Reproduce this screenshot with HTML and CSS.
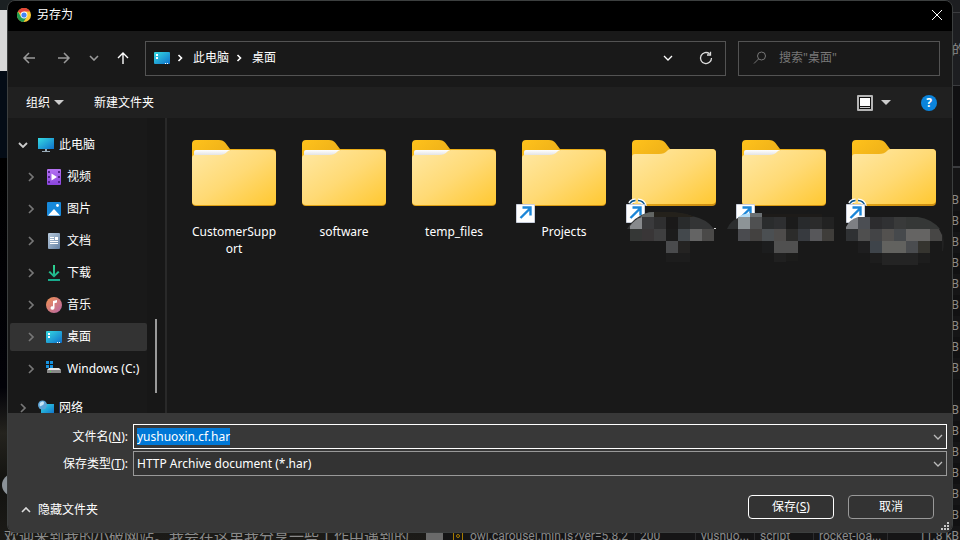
FILE: index.html
```html
<!DOCTYPE html>
<html lang="zh-CN">
<head>
<meta charset="utf-8">
<title>另存为</title>
<link rel="stylesheet" href="styles.css">
</head>
<body>
<svg class="defs" aria-hidden="true">
  <defs>
    <linearGradient id="gFront" x1="0" y1="0" x2="1" y2="1">
      <stop offset="0" stop-color="#ffe8a4"/><stop offset=".5" stop-color="#ffda75"/><stop offset="1" stop-color="#ffc831"/>
    </linearGradient>
    <linearGradient id="gBack" x1="0" y1="0" x2="1" y2="1">
      <stop offset="0" stop-color="#ffc21c"/><stop offset="1" stop-color="#c98a10"/>
    </linearGradient>
    <linearGradient id="gPaper" x1="0" y1="0" x2="0" y2="1">
      <stop offset="0" stop-color="#fff"/><stop offset="1" stop-color="#d3d3d3"/>
    </linearGradient>
    <linearGradient id="gBlue" x1="0" y1="0" x2="1" y2="1">
      <stop offset="0" stop-color="#35dbe2"/><stop offset="1" stop-color="#0f70cc"/>
    </linearGradient>
    <linearGradient id="gPurple" x1="0" y1="0" x2="0" y2="1">
      <stop offset="0" stop-color="#b573f2"/><stop offset="1" stop-color="#8a45dd"/>
    </linearGradient>
    <linearGradient id="gDoc" x1="0" y1="0" x2="1" y2="1">
      <stop offset="0" stop-color="#b9cbdd"/><stop offset="1" stop-color="#6481a3"/>
    </linearGradient>
    <linearGradient id="gMusic" x1="0" y1="0" x2="1" y2="1">
      <stop offset="0" stop-color="#f0914f"/><stop offset="1" stop-color="#b766a8"/>
    </linearGradient>
    <linearGradient id="gDown" x1="0" y1="0" x2="0" y2="1">
      <stop offset="0" stop-color="#2fd390"/><stop offset="1" stop-color="#17a98c"/>
    </linearGradient>

    <symbol id="folder" viewBox="0 0 96 96">
      <path d="M6 16a4 4 0 0 1 4-4h23c3 0 5 1 6.500 3l4.500 6h42a4 4 0 0 1 4 4v49a4 4 0 0 1-4 4h-76a4 4 0 0 1-4-4z" fill="url(#gBack)"/>
      <path d="M8 24a2 2 0 0 1 2-2h34v8H8z" fill="url(#gPaper)"/>
      <path d="M6 30c0-2 1-3 3-3h24c4 0 6-1 8-3l1-1c1-.8 2-1 3-1h41a4 4 0 0 1 4 4v47a4 4 0 0 1-4 4h-76a4 4 0 0 1-4-4z" fill="url(#gFront)"/>
    </symbol>
    <symbol id="folder-empty" viewBox="0 0 96 96">
      <path d="M6 16a4 4 0 0 1 4-4h23c3 0 5 1 6.500 3l4.500 6h42a4 4 0 0 1 4 4v49a4 4 0 0 1-4 4h-76a4 4 0 0 1-4-4z" fill="url(#gBack)"/>
      <path d="M6 29c0-2 1-3 3-3h24c4 0 6-1 8-3l1-1c1-.8 2-1 3-1h41a4 4 0 0 1 4 4v47a4 4 0 0 1-4 4h-76a4 4 0 0 1-4-4z" fill="url(#gFront)"/>
    </symbol>
    <symbol id="shortcut" viewBox="0 0 96 96">
      <path d="M.5 76.500h18v18H.5z" fill="#fff" stroke="#c9cfdc"/>
      <path d="M4.500 90 14 80.500M6.500 79.500H14.500V87.500" fill="none" stroke="#1b86d8" stroke-width="2.400"/>
    </symbol>
    <symbol id="sync" viewBox="0 0 96 96">
      <path d="M4 75.500c1-2 3-3 5.500-3M12 72.500c3 0 6 2 7 5.500" fill="none" stroke="#fff" stroke-width="4"/>
      <path d="M4 75.500c1-2 3-3 5.500-3M12 72.500c3 0 6 2 7 5.500" fill="none" stroke="#0d5892" stroke-width="1.500"/>
    </symbol>
    <symbol id="desktop" viewBox="0 0 16 16">
      <rect x="0" y="2" width="16" height="12" rx="1" fill="url(#gBlue)"/>
      <path d="M2 4h2v2H2zM2 7h2v2H2zM11 13h1v1h-1zM13 13h1v1h-1z" fill="#fff"/>
    </symbol>
    <symbol id="right" viewBox="0 0 16 16"><path d="M6 4l4 4-4 4" fill="none" stroke="currentColor" stroke-width="1.700"/></symbol>
    <symbol id="down" viewBox="0 0 16 16"><path d="M4 6l4 4 4-4" fill="none" stroke="currentColor" stroke-width="1.300"/></symbol>
    <symbol id="caret" viewBox="0 0 10 5"><path d="M0 0h10L5 5z" fill="currentColor"/></symbol>
  </defs>
</svg>

<div class="backdrop" aria-hidden="true">
  <div class="site">
    <div class="site-top"></div>
    <div class="site-light"></div>
    <div class="site-navy"></div>
    <div class="site-photo">
      <span class="knob"></span>
      <p class="site-text">欢迎来到我的小破网站。我会在这里我分享一些工作中遇到的</p>
    </div>
  </div>
  <div class="site-scroll"></div>
  <div class="devtools">
    <div class="dev-tabs"></div>
    <div class="dev-note">的</div>
    <div class="dev-chart"></div>
    <div class="dev-head"></div>
    <div class="dev-row">B</div><div class="dev-row">B</div><div class="dev-row">B</div>
    <div class="dev-row">B</div><div class="dev-row">B</div><div class="dev-row">B</div>
    <div class="dev-row">B</div><div class="dev-row">B</div><div class="dev-row">B</div>
    <div class="dev-row"></div><div class="dev-row">B</div><div class="dev-row">B</div>
    <div class="dev-row">B</div><div class="dev-row">B</div><div class="dev-row">B</div>
    <div class="dev-row">B</div>
    <div class="dev-row full">
      <span class="dev-name"><svg width="12" height="14" viewBox="0 0 12 14" fill="none" stroke="#a87c00"><path d="M1.500.5h9v13h-9z"/><circle cx="6" cy="6" r="1.500"/></svg>owl.carousel.min.js?ver=5.8.2</span>
      <span>200</span><span>yushuo...</span><span>script</span><span class="dev-init">rocket-loa...</span><span class="dev-size">11.8 kB</span>
    </div>
  </div>
</div>

<main class="dialog">
  <header class="title">
    <svg width="14" height="14" viewBox="0 0 14 14">
      <circle cx="7" cy="7" r="7" fill="#fbc934"/>
      <path d="M7 7 .9 3.500A7 7 0 0 1 13.100 3.500H7z" fill="#e5453a"/>
      <path d="M.9 3.500A7 7 0 0 0 6.500 14L10 8.800 7 7 4 8.700z" fill="#219a52"/>
      <circle cx="7" cy="7" r="3.400" fill="#fff"/><circle cx="7" cy="7" r="2.600" fill="#4285f4"/>
    </svg>
    <h1>另存为</h1>
    <button class="close" aria-label="关闭"><svg width="10" height="10" viewBox="0 0 10 10" fill="none" stroke="#fff"><path d="M0 0l10 10M10 0L0 10"/></svg></button>
  </header>

  <nav class="navbar">
    <div class="moves">
      <button aria-label="后退"><svg width="14" height="12" viewBox="0 0 14 12" fill="none" stroke="#999" stroke-width="1.500"><path d="M13 6H2M7 1L2 6l5 5"/></svg></button>
      <button aria-label="前进"><svg width="14" height="12" viewBox="0 0 14 12" fill="none" stroke="#999" stroke-width="1.500"><path d="M1 6h11M7 1l5 5-5 5"/></svg></button>
      <button class="recent" aria-label="最近浏览的位置"><svg width="10" height="6" viewBox="0 0 10 6" fill="none" stroke="#999" stroke-width="1.600"><path d="M1 1l4 4 4-4"/></svg></button>
      <button class="up" aria-label="上移"><svg width="12" height="14" viewBox="0 0 12 14" fill="none" stroke="#fff" stroke-width="1.400"><path d="M6 13V2M1 7l5-5 5 5"/></svg></button>
    </div>
    <div class="address">
      <svg width="16" height="16"><use href="#desktop"/></svg>
      <svg class="sep" width="16" height="16" viewBox="0 0 16 16" fill="none" stroke="#fff" stroke-width="1.600"><path d="M6.500 5l3 3-3 3"/></svg>
      <a href="#pc">此电脑</a>
      <svg class="sep" width="16" height="16" viewBox="0 0 16 16" fill="none" stroke="#fff" stroke-width="1.600"><path d="M6.500 5l3 3-3 3"/></svg>
      <a href="#desk">桌面</a>
      <button class="history" aria-label="历史记录"><svg width="16" height="16"><use href="#down"/></svg></button>
      <button aria-label="刷新"><svg width="14" height="14" viewBox="0 0 14 14" fill="none" stroke="#ddd" stroke-width="1.300"><path d="M12.500 7A5.500 5.500 0 1 1 10.500 2.800M11.500.8V4H8"/></svg></button>
    </div>
    <label class="search">
      <svg width="14" height="14" viewBox="0 0 14 14" fill="none" stroke="#777"><circle cx="8.500" cy="5" r="4"/><path d="M5.500 8 1 12.500"/></svg>
      <input type="search" aria-label="搜索" placeholder="搜索&quot;桌面&quot;">
    </label>
  </nav>

  <div class="toolbar">
    <button>组织<svg width="10" height="5"><use href="#caret"/></svg></button>
    <button>新建文件夹</button>
    <button class="view" aria-label="更改视图">
      <svg width="16" height="16" viewBox="0 0 16 16"><rect width="16" height="16" rx="1" fill="#b5b5b5"/><path d="M2 2h12v12H2z" fill="#111"/><path d="M3 3h10v8H3z" fill="#fff"/><path d="M3 12h10v1H3z" fill="#ccc"/></svg>
      <svg width="10" height="5"><use href="#caret"/></svg>
    </button>
    <button class="help" aria-label="帮助">?</button>
  </div>

  <div class="body">
    <ul class="tree">
      <li><button class="root"><svg class="open" width="16" height="16" viewBox="0 0 16 16" fill="none" stroke="#ccc" stroke-width="1.800"><path d="M4 6l4 4 4-4"/></svg>
        <svg width="16" height="16" viewBox="0 0 16 16"><path d="M0 1h16v11H0z" fill="url(#gBlue)"/><path d="M7 12h2v2H7zM4 14h8v1H4z" fill="#9aabb8"/></svg>此电脑</button></li>
      <li><button><svg class="arrow"><use href="#right"/></svg>
        <svg width="16" height="16" viewBox="0 0 16 16"><rect x="1" width="14" height="16" rx="1" fill="url(#gPurple)"/><path d="M2 2h2v2H2zM2 7h2v2H2zM2 12h2v2H2zM12 2h2v2h-2zM12 7h2v2h-2zM12 12h2v2h-2z" fill="#53248c"/><path d="M5.500 4.500 11 8l-5.500 3.500z" fill="#fff"/></svg>视频</button></li>
      <li><button><svg class="arrow"><use href="#right"/></svg>
        <svg width="16" height="16" viewBox="0 0 16 16"><rect x="1" y="1" width="14" height="14" rx="1" fill="#1789db"/><path d="M2 14.500 8 8l6 6.500z" fill="#fff"/><circle cx="11.500" cy="4.500" r="1.400" fill="#fff"/></svg>图片</button></li>
      <li><button><svg class="arrow"><use href="#right"/></svg>
        <svg width="16" height="16" viewBox="0 0 16 16"><rect x="2" width="12" height="16" rx="1" fill="url(#gDoc)"/><path d="M4 4h4v1H4zM4 6h4v1H4zM9 4h3v3H9zM4 8h8v1H4zM4 10h8v1H4z" fill="#fff"/></svg>文档</button></li>
      <li><button><svg class="arrow"><use href="#right"/></svg>
        <svg width="16" height="16" viewBox="0 0 16 16"><path d="M7 0h2v9l3-3 1.500 1.300L8 12.500 2.500 7.300 4 6l3 3zM2 14h12v2H2z" fill="url(#gDown)"/></svg>下载</button></li>
      <li><button><svg class="arrow"><use href="#right"/></svg>
        <svg width="16" height="16" viewBox="0 0 16 16"><circle cx="8" cy="8" r="8" fill="url(#gMusic)"/><path d="M7 4l4-1v2.500l-2.500.8V11A2 1.700 0 1 1 7 9.300z" fill="#fff"/></svg>音乐</button></li>
      <li><button class="selected"><svg class="arrow"><use href="#right"/></svg>
        <svg width="16" height="16"><use href="#desktop"/></svg>桌面</button></li>
      <li><button><svg class="arrow"><use href="#right"/></svg>
        <svg width="16" height="16" viewBox="0 0 16 16"><path d="M0 0h3v3H0zM4 0h3v3H4zM0 4h3v3H0zM4 4h3v3H4z" fill="#1793e0"/><path d="M3 7h10l2 2H1z" fill="#e8e8e8"/><path d="M1 9h14v3H1z" fill="#888"/><path d="M4 10h1v1H4z" fill="#4be04b"/></svg>Windows (C:)</button></li>
      <li class="network"><button class="root"><svg class="arrow"><use href="#right"/></svg>
        <svg width="16" height="16" viewBox="0 0 16 16"><path d="M3 4h13v10H3z" fill="url(#gBlue)"/><circle cx="4.500" cy="5" r="4.500" fill="#5da4d6"/><path d="M2 3c2-2 4-2 4 0S4 5 3 6 1 5 2 3z" fill="#c5e4f5"/></svg>网络</button></li>
    </ul>
    <div class="gutter"><div class="thumb"></div></div>

    <ul class="files">
      <li><svg class="icon"><use href="#folder"/></svg><span>CustomerSupport</span></li>
      <li><svg class="icon"><use href="#folder"/></svg><span>software</span></li>
      <li><svg class="icon"><use href="#folder"/></svg><span>temp_files</span></li>
      <li><svg class="icon"><use href="#folder"/><use href="#shortcut"/></svg><span>Projects</span></li>
      <li><svg class="icon"><use href="#folder-empty"/><use href="#sync"/><use href="#shortcut"/></svg>
        <svg class="mosaic" viewBox="619 208 110 60">
          <path fill="#333435" d="M627 229q6-12 22-17h12q20 0 31 4 15 3 22 13z"/>
          <path fill="#636664" d="M640 217q5-5 14-5v5z"/><path fill="#24211b" d="M654 212h18q16 1 22 5h-40z"/>
          <path fill="#87898c" d="M630 226q5-7 12-9v12h-12z"/>
          <path fill="#3a3a3c" d="M642 217h12v12h-12z"/><path fill="#2f2f30" d="M654 217h12v12h-12z"/><path fill="#1a1919" d="M666 217h12v12h-12z"/><path fill="#292b2c" d="M678 217h12v12h-12z"/>
          <path fill="#353736" d="M630 229h12v12h-12z"/><path fill="#393637" d="M642 229h12v12h-12z"/><path fill="#3f3f40" d="M654 229h12v12h-12z"/><path fill="#1c1c1c" d="M666 229h12v12h-12z"/><path fill="#43484c" d="M678 229h12v12h-12z"/><path fill="#646464" d="M690 229h12v12h-12z"/><path fill="#4a4948" d="M702 229h12v12h-12z"/>
          <path fill="#4a4b4d" d="M666 241h12v12h-12z"/><path fill="#242322" d="M678 241h12v12h-12z"/><path fill="#1d1d1d" d="M666 253h24v9h-24z"/><path fill="#ddd" d="M714 228h2v1h-2z"/>
        </svg></li>
      <li><svg class="icon"><use href="#folder"/><use href="#shortcut"/></svg>
        <svg class="mosaic" viewBox="729 208 110 60">
          <path fill="#2b2d2e" d="M727 229q3-8 11-11v11z"/>
          <path fill="#b4dcf5" d="M738 217q4-3 12-4v4z"/><path fill="#6b7073" d="M750 213h12v4h-12z"/><path fill="#1d1b19" d="M762 214h60v3h-60z"/>
          <path fill="#8d9497" d="M738 217h12v12h-12z"/><path fill="#4f5051" d="M750 217h12v12h-12z"/><path fill="#2a2c2d" d="M762 217h12v12h-12z"/><path fill="#2e2f31" d="M774 217h12v12h-12z"/><path fill="#1b1b1b" d="M786 217h12v12h-12z"/><path fill="#282a2c" d="M798 217h12v12h-12z"/><path fill="#2b2b2b" d="M810 217h12v12h-12z"/><path fill="#222" d="M822 217h12v12h-12z"/>
          <path fill="#4a4b4f" d="M738 229h12v12h-12z"/><path fill="#434140" d="M750 229h12v12h-12z"/><path fill="#4b4f52" d="M762 229h12v12h-12z"/><path fill="#4e4c4b" d="M774 229h12v12h-12z"/><path fill="#2c2c2b" d="M786 229h12v12h-12z"/><path fill="#373a3f" d="M798 229h12v12h-12z"/><path fill="#57575a" d="M810 229h12v12h-12z"/><path fill="#3f3d3a" d="M822 229h12v12h-12z"/>
          <path fill="#1c1d1e" d="M762 241h12v12h-12z"/><path fill="#505050" d="M774 241h24v12h-24z"/><path fill="#202020" d="M774 253h12v9h-12z"/><path fill="#1c1c1b" d="M786 253h12v8h-12z"/>
        </svg></li>
      <li><svg class="icon"><use href="#folder-empty"/><use href="#sync"/><use href="#shortcut"/></svg>
        <svg class="mosaic" viewBox="839 208 110 60">
          <path fill="#7d7f83" d="M846 227q4-8 12-10v12h-12z"/><path fill="#4b4e53" d="M858 217h12v12h-12z"/><path fill="#2c2c2e" d="M870 217h12v12h-12z"/><path fill="#303133" d="M882 217h12v12h-12z"/><path fill="#393a3a" d="M894 217h12v12h-12z"/><path fill="#353736" d="M906 217h12q14 2 22 12h-34z"/>
          <path fill="#2f3133" d="M846 229h12v12h-12z"/><path fill="#4f4f4f" d="M858 229h12v12h-12z"/><path fill="#434446" d="M870 229h12v12h-12z"/><path fill="#53514f" d="M882 229h12v12h-12z"/><path fill="#46494c" d="M894 229h12v12h-12z"/><path fill="#656463" d="M906 229h24v12h-24z"/><path fill="#474645" d="M930 229h9l3 6v6h-12z"/><path fill="#222" d="M942 233q3 8 1 18h-1z"/>
          <path fill="#1e1e1f" d="M858 241h12v12h-12z"/><path fill="#3e444a" d="M870 241h12v12h-12z"/><path fill="#62625f" d="M882 241h24v12h-24z"/><path fill="#4a4c4f" d="M906 241h12v12h-12z"/><path fill="#35342f" d="M918 241h12v12h-12z"/>
          <path fill="#1d1d1d" d="M870 253h60v10h-60z"/><path fill="#242424" d="M882 253h36v12h-36z"/>
        </svg></li>
    </ul>
  </div>

  <form class="footer" onsubmit="return false">
    <div class="fields">
      <label for="fname">文件名(<u>N</u>):</label>
      <div class="combo active">
        <input id="fname" type="text" value="yushuoxin.cf.har" autocomplete="off" spellcheck="false" autofocus>
        <svg><use href="#down"/></svg>
      </div>
      <label for="ftype">保存类型(<u>T</u>):</label>
      <div class="combo">
        <select id="ftype"><option>HTTP Archive document (*.har)</option></select>
        <svg><use href="#down"/></svg>
      </div>
    </div>
    <div class="actions">
      <button class="fold" type="button"><svg width="10" height="6" viewBox="0 0 10 6" fill="none" stroke="#ddd" stroke-width="1.600"><path d="M1 5l4-4 4 4"/></svg>隐藏文件夹</button>
      <button class="push primary" type="submit">保存(<u>S</u>)</button>
      <button class="push" type="button">取消</button>
    </div>
    <svg class="grip" width="8" height="8" viewBox="0 0 8 8" fill="#c8c8c8"><path d="M6 0h2v2H6zM3 3h2v2H3zM6 3h2v2H6zM0 6h2v2H0zM3 6h2v2H3zM6 6h2v2H6z"/></svg>
  </form>
</main>
<script src="app.js"></script>
</body>
</html>
```
FILE: styles.css
```css
* { box-sizing: border-box; }

body {
  margin: 0;
  height: 100vh;
  overflow: hidden;
  background: #000;
  color: #fff;
  font: 12px/16px "Noto Sans", "Noto Sans CJK SC", sans-serif;
}

button, input, select {
  margin: 0;
  padding: 0;
  border: 0;
  background: none;
  color: inherit;
  font: inherit;
  outline: none;
}

button { display: flex; align-items: center; justify-content: center; }
ul { margin: 0; padding: 0; list-style: none; }
a { color: inherit; text-decoration: none; }
svg { display: block; flex: none; }
.defs { position: absolute; width: 0; height: 0; }

/* Windows behind the dialog */
.backdrop {
  position: absolute;
  inset: 0;
  display: grid;
  grid-template-columns: 426px 17px 1fr;
  overflow: hidden;
  color: #8a8a8a;
}
.site { display: flex; flex-direction: column; min-height: 0; }
.site-top { height: 10px; background: #1b2022; }
.site-light { height: 61px; background: #d8d8d8; }
.site-navy { height: 87px; background: #040c16; }
.site-photo {
  flex: 1;
  display: flex;
  flex-direction: column;
  justify-content: flex-end;
  background: linear-gradient(#000 0, #020208 60%, #24231e 72%, #12120f 85%, #1c1b18 100%);
}
.knob { width: 22px; height: 22px; margin: 0 0 30px 2px; border-radius: 50%; background: #8b9298; }
.site-text { margin: 0 0 -6px 4px; font-size: 15px; line-height: 20px; white-space: nowrap; }
.site-scroll { background: #6a6a6a; }
.devtools { display: flex; flex-direction: column; min-width: 0; background: #151516; overflow: hidden; font-family: Roboto, "Noto Sans CJK SC", sans-serif; }
.devtools > * { flex: none; }
.dev-tabs { height: 13px; background: #1d1e21; border-bottom: 1px solid #3b3c3f; }
.dev-note { height: 73px; margin-right: -5px; line-height: 73px; font-size: 13px; text-align: right; background: #1d1e21; border-bottom: 1px solid #3b3c3f; }
.dev-chart { height: 82px; border-bottom: 2px solid #3b3c3f; background: #101012; }
.dev-head { height: 22px; }
.dev-row { height: 21px; padding-right: 1px; line-height: 21px; text-align: right; }
.dev-row:nth-child(even) { background: #111112; }
.dev-row.full {
  display: grid;
  grid-template-columns: 192px 61px 59px 59px 74px 1fr;
  text-align: left;
}
.full span { padding-left: 5px; border-right: 1px solid #2c2c2e; white-space: nowrap; }
.full .dev-name { display: flex; align-items: center; gap: 6px; padding-left: 9px; }
.full .dev-size { padding: 0; border: 0; text-align: right; }

/* Dialog shell */
.dialog {
  position: relative;
  display: flex;
  flex-direction: column;
  height: calc(100vh - 7px);
  margin: 0 7px;
  border: 1px solid #3c3f3f;
  border-radius: 8px;
  overflow: hidden;
  background: #191919;
}

.title { display: flex; align-items: center; gap: 6px; height: 30px; padding: 0 10px 2px 9px; background: #000; }
.title h1 { margin: 0; font-size: 12px; font-weight: 400; }
.close { margin-left: auto; }

.navbar { display: flex; align-items: center; height: 56px; padding: 0 12px 2px 3px; }
.moves { display: flex; width: 134px; }
.moves button { width: 35px; height: 32px; }
.moves .recent { width: 26px; }
.moves .up { width: 32px; }
.address { display: flex; flex: 1; align-items: center; height: 35px; padding: 0 7px 0 8px; border: 1px solid #535353; }
.address .sep { margin: 0 5px 0 2px; }
.address button { width: 24px; height: 24px; }
.address .history { margin: 0 14px 0 auto; }
.search { display: flex; align-items: center; gap: 12px; width: 202px; height: 35px; margin-left: 12px; padding: 0 14px; border: 1px solid #535353; }
.search input { flex: 1; min-width: 0; }
.search input::placeholder { color: #777; opacity: 1; }

.toolbar { display: flex; align-items: center; gap: 30px; height: 31px; padding: 0 15px 0 18px; background: #202020; }
.toolbar button { gap: 4px; }
.toolbar use { color: #ccc; }
.toolbar .view { gap: 8px; margin-left: auto; }
.toolbar .help { width: 16px; height: 16px; border-radius: 50%; background: #0b84dc; font-weight: 700; }

/* Folder tree and file grid */
.body { display: flex; flex: 1; min-height: 0; }
.tree { display: flex; flex-direction: column; gap: 4px; width: 139px; padding: 13px 0 0 2px; overflow: hidden; }
.tree li { flex: none; }
.tree .network { margin-top: 7px; }
.tree button { justify-content: flex-start; gap: 5px; width: 100%; height: 28px; padding-left: 13px; border-radius: 2px; white-space: nowrap; }
.tree .root { padding-left: 5px; }
.tree .selected { background: #333; }
.tree svg:first-child { margin-right: 2px; }
.arrow { width: 16px; height: 16px; color: #777; }
.gutter { display: flex; flex-direction: column; justify-content: flex-end; align-items: center; width: 20px; padding-bottom: 20px; background: #171717; border-right: 2px solid #292929; }
.thumb { width: 2px; height: 74px; background: #9a9a9a; }
.files { display: grid; flex: 1; grid-template-columns: repeat(auto-fill, 110px); align-content: start; padding: 10px 0 0 12px; }
.files li { position: relative; display: flex; flex-direction: column; align-items: center; }
.icon { width: 96px; height: 96px; margin-bottom: -1px; }
.files span { width: 90px; line-height: 17px; text-align: center; word-break: break-all; }
.mosaic { position: absolute; left: 0; top: 80px; width: 110px; height: 60px; overflow: visible; }

/* File name, type and actions */
.footer { position: relative; padding: 11px 5px 13px; background: #383838; }
.fields { display: grid; grid-template-columns: 115px 1fr; gap: 2px 5px; align-items: center; }
.fields label { text-align: right; }
.combo { display: flex; align-items: center; height: 25px; padding: 0 0 0 3px; border: 1px solid #999; background: #333; line-height: 17px; }
.combo.active { border-color: #fff; background: #383838; }
.combo input, .combo select { flex: 1; min-width: 0; height: 17px; appearance: none; }
.combo svg { width: 16px; height: 16px; color: #bbb; }
.combo ::selection { background: #0078d7; color: #fff; }
.actions { display: flex; align-items: center; gap: 14px; margin-top: 19px; padding-right: 13px; }
.fold { gap: 7px; margin: 6px auto 0 8px; }
.push { width: 86px; height: 24px; border: 1px solid #999; border-radius: 4px; background: #333; }
.push.primary { border-color: #fff; }
.grip { position: absolute; right: 3px; bottom: 2px; }
```
FILE: app.js
```js
const nameField = document.getElementById('fname');
nameField.focus();
nameField.select();
```
